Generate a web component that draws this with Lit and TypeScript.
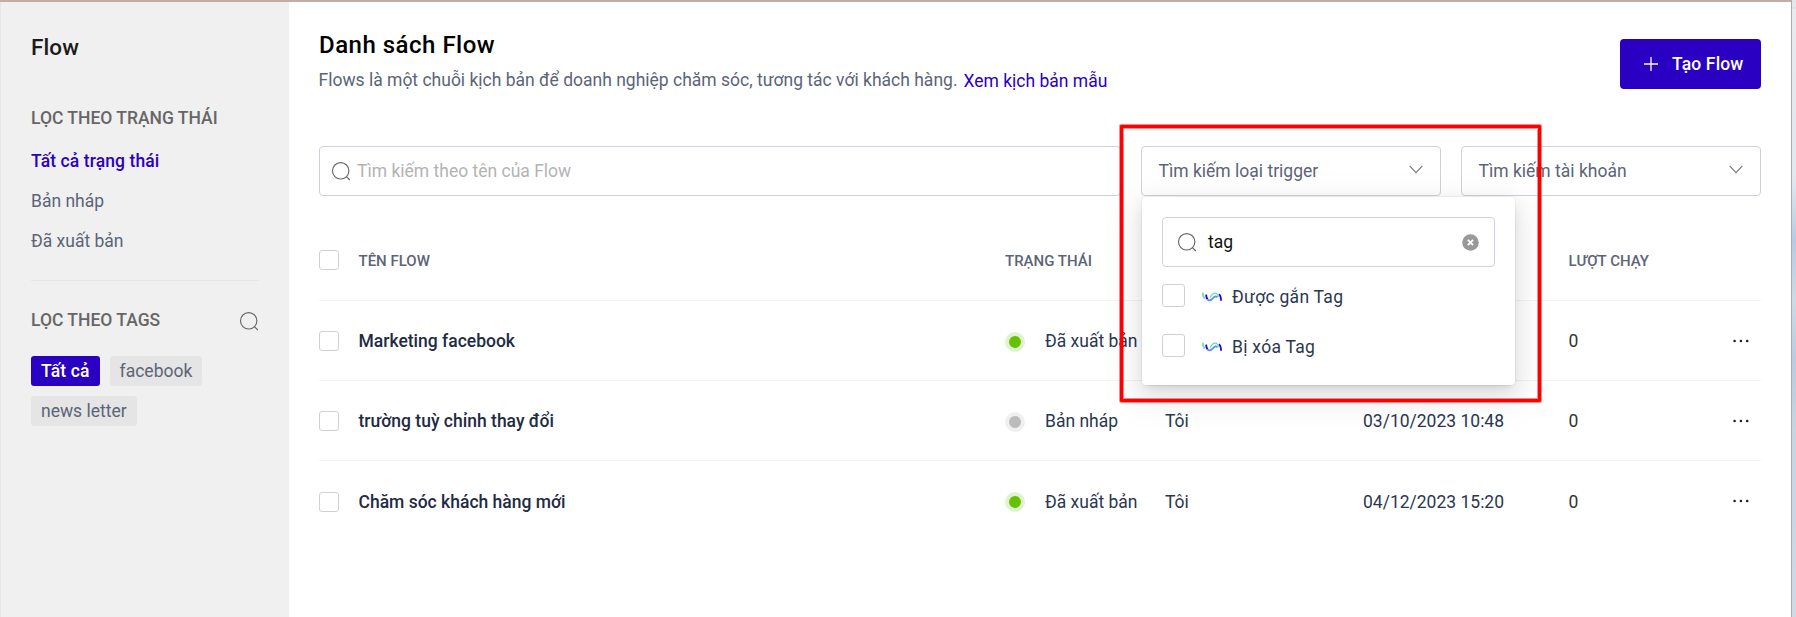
import { LitElement, html, css, svg } from "lit";
import { customElement } from "lit/decorators.js";
import { classMap } from "lit/directives/class-map.js";

const searchIcon = html`<svg class="search-icon" width="20" height="20" viewBox="0 0 20 20" fill="none" stroke="currentColor" stroke-width="1.15">
  <circle cx="9.7" cy="9.8" r="8.2"></circle>
  <path d="M15.4 15.6L18.8 19"></path>
</svg>`;

const chevron = html`<svg class="chevron" width="14" height="9" viewBox="0 0 14 9" fill="none" stroke="#777" stroke-width="1.1">
  <path d="M0.7 0.8L7 7.6L13.3 0.8"></path>
</svg>`;

const strands = svg`
  <path d="M0.8 0.8 C0.9 3.4 1.4 5.2 2.8 6.6" stroke="#62e3bf"></path>
  <path d="M4.1 2.6 C4.2 4.6 4.7 6.2 5.6 7.4" stroke="#2b00c4"></path>
  <path d="M5.6 7.8 C7.8 9.4 9.8 7.6 11.2 6 C12.6 4.2 14.6 3.6 15.4 5.4" stroke="#4b8dff"></path>
  <path d="M8 5.6 C9.4 3 11.8 0.6 14 1.2 C15.8 1.8 16.2 3.6 16.4 5" stroke="#5fdcc8" stroke-width="1.3"></path>
  <path d="M17 2.2 C18.5 3.4 19 5.8 19.1 8.8" stroke="#2b00c4"></path>`;
const brandIcon = html`<svg class="brand" width="20" height="10" viewBox="0 0 20 10" fill="none" stroke-width="1.8">${strands}</svg>`;

const rows = [
  { name: "Marketing facebook", status: "Đã xuất bản", live: true, owner: "", date: "", runs: 0 },
  { name: "trường tuỳ chỉnh thay đổi", status: "Bản nháp", live: false, owner: "Tôi", date: "03/10/2023 10:48", runs: 0 },
  { name: "Chăm sóc khách hàng mới", status: "Đã xuất bản", live: true, owner: "Tôi", date: "04/12/2023 15:20", runs: 0 },
];

@customElement("app-root")
export class AppRoot extends LitElement {
  static styles = css`
    :host { display: block; font-family: Roboto, "Liberation Sans", sans-serif; font-size: 17.5px; line-height: 22px; color: #5b6478; }
    * { box-sizing: border-box; }
    svg { display: block; flex: none; }
    .page { position: relative; display: flex; width: 1796px; height: 617px; background: #fff; overflow: hidden; }
    .window { flex: 1; display: flex; border-top: 2px solid #c4aca6; }
    .edge { width: 5px; border-left: 1px solid #a9adb3; background: linear-gradient(#e6e7ea 0, #e6e7ea 7px, #d8dadd 8px, #e8eaed 9px, #e2e7ee 180px, #b5cbe4 240px, #ccd9e8 300px, #b9cce2 360px, #c6d4e5 430px, #d0d9e6 617px); }

    .sidebar { width: 289px; background: #f0f0f0; border-left: 1px solid #e6e6e6; padding: 25px 30px 0; }
    .brand-title { font-size: 22.5px; line-height: 28px; color: #1b1b1b; font-weight: 500; padding-top: 6px; letter-spacing: 0.1px; }
    .section { display: flex; justify-content: space-between; font-weight: 500; color: #666; }
    .states { margin-top: 46px; }
    .state { margin-top: 18px; }
    .state:first-of-type { margin-top: 21px; }
    .state.active { color: #2b00c4; font-weight: 500; letter-spacing: 0.1px; }
    .tags-head { margin-top: 28px; padding-top: 28px; border-top: 1px solid #e7e7e7; width: 228px; }
    .tags-head .search-icon { margin-top: 2px; color: #666; }
    .tags { display: flex; flex-wrap: wrap; gap: 10px; margin-top: 25px; }
    .tag { height: 30px; line-height: 31px; padding: 0 10px; border-radius: 3px; background: #e5e5e5; }
    .tag.active { background: #2a00c2; color: #fff; font-weight: 500; letter-spacing: 0.15px; }

    .main { flex: 1; padding: 29px 30px 0; }
    .header { display: flex; justify-content: space-between; height: 115px; }
    .title { font-size: 24px; line-height: 28px; color: #000; font-weight: 500; letter-spacing: 0.5px; }
    .sub { display: flex; gap: 6px; margin-top: 10px; }
    .sub .lead { margin-left: -0.5px; }
    .link { color: #2b00c4; padding-top: 1px; }
    .create { width: 141px; height: 50px; margin-top: 8px; border-radius: 4px; background: #2a00c2; color: #fff; font-weight: 500; letter-spacing: 0.15px; display: flex; align-items: center; padding: 0 0 0 24px; gap: 14px; }
    .filters { display: grid; grid-template-columns: 1fr 300px 300px; gap: 20px; }
    .box { position: relative; height: 50px; border: 1px solid #d0d1da; border-radius: 4px; display: flex; align-items: center; }
    .search { padding-left: 11px; color: #666; }
    .search .placeholder { margin-left: 6px; color: #b3b3b3; }
    .select { padding: 0 17.5px 0 16.5px; justify-content: space-between; }
    .chevron { margin-top: -4px; }

    .popup { position: absolute; z-index: 2; top: 50px; left: 0; width: 373px; height: 188px; padding: 20px; background: #fff; border-radius: 4px; color: #2a3750;
      box-shadow: 0 0 0 1px rgba(0,0,0,.04), 0 4px 7.5px -5px rgba(0,0,0,.16), 0 7.5px 20px rgba(0,0,0,.1), 0 11px 35px 10px rgba(0,0,0,.05); }
    .find { width: 333px; padding: 0 15.5px 0 14px; color: #666; }
    .find .query { flex: 1; margin-left: 11px; color: #111; }
    .option { display: flex; height: 50px; padding-top: 17px; }
    .check { width: 20px; height: 20px; border: 1px solid #d0d1d8; border-radius: 3px; background: #fff; }
    .option .check { width: 23px; height: 23px; }
    .option .brand { margin: 8px 10px 0 17px; }
    .option .label { padding-top: 2px; letter-spacing: 0.28px; }

    .table { margin-top: 24px; }
    .row { display: grid; grid-template-columns: 39.5px 646.5px 160px 198px 205.5px 1fr 28px; align-items: start; height: 80px; color: #2a3750; border-bottom: 1px solid #f2f2f2; }
    .row:last-child { border-bottom: 0; }
    .row .check { margin-top: 30px; }
    .cell { padding-top: 29px; }
    .row.last .check { margin-top: 31px; }
    .row.last .cell { padding-top: 30px; }
    .row.head { height: 81px; font-size: 15px; line-height: 20px; font-weight: 500; color: #5b6478; }
    .head .cell { padding-top: 31px; }
    .name { font-weight: 500; color: #1e2b45; }
    .status { display: grid; grid-template-columns: 40px 1fr; align-items: start; }
    .dot { width: 20px; height: 20px; margin-top: 31px; border: 4px solid #e0f2cf; border-radius: 50%; background: #66c200; }
    .dot.draft { border-color: #f0f0f0; background: #bbb; }
    .runs { color: #333; }
    .more { margin-top: 38px; }
    .highlight { position: absolute; z-index: 3; left: 1120px; top: 125px; width: 421px; height: 277px; border: 3px solid #f00; box-shadow: 0 0 0 1px rgba(255,0,0,.45), inset 0 0 0 1px rgba(255,0,0,.45); border-radius: 1px; }
  `;

  private option(label: string) {
    return html`<div class="option"><span class="check"></span>${brandIcon}<span class="label">${label}</span></div>`;
  }

  private row(r: (typeof rows)[number], i: number) {
    return html`<div class=${classMap({ row: true, last: i === rows.length - 1 })}>
      <span class="check"></span>
      <span class="cell name">${r.name}</span>
      <span class="status"><i class=${classMap({ dot: true, draft: !r.live })}></i><span class="cell">${r.status}</span></span>
      <span class="cell">${r.owner}</span>
      <span class="cell">${r.date}</span>
      <span class="cell runs">${r.runs}</span>
      <svg class="more" width="16" height="4" viewBox="0 0 16 4" fill="#222"><circle cx="1.6" cy="2" r="1.3"></circle><circle cx="7.9" cy="2" r="1.3"></circle><circle cx="14.2" cy="2" r="1.3"></circle></svg>
    </div>`;
  }

  render() {
    return html`<div class="page">
      <div class="window">
        <aside class="sidebar">
          <div class="brand-title">Flow</div>
          <div class="section states">LỌC THEO TRẠNG THÁI</div>
          <nav>
            <div class="state active">Tất cả trạng thái</div>
            <div class="state">Bản nháp</div>
            <div class="state">Đã xuất bản</div>
          </nav>
          <div class="section tags-head"><span>LỌC THEO TAGS</span>${searchIcon}</div>
          <div class="tags"><span class="tag active">Tất cả</span><span class="tag">facebook</span><span class="tag">news letter</span></div>
        </aside>
        <main class="main">
          <div class="header">
            <div>
              <div class="title">Danh sách Flow</div>
              <div class="sub"><span class="lead">Flows là một chuỗi kịch bản để doanh nghiệp chăm sóc, tương tác với khách hàng.</span><span class="link">Xem kịch bản mẫu</span></div>
            </div>
            <div class="create">
              <svg width="14" height="14" viewBox="0 0 14 14" stroke="#fff" stroke-width="1.3"><path d="M7 0V14M0 7H14"></path></svg>
              <span>Tạo Flow</span>
            </div>
          </div>
          <div class="filters">
            <div class="box search">${searchIcon}<span class="placeholder">Tìm kiếm theo tên của Flow</span></div>
            <div class="box select"><span>Tìm kiếm loại trigger</span>${chevron}
              <div class="popup">
                <div class="box find">${searchIcon}<span class="query">tag</span>
                  <svg width="17" height="17" viewBox="0 0 17 17"><circle cx="8.5" cy="8.5" r="8.3" fill="#999"></circle><path d="M5.9 5.9L11.1 11.1M11.1 5.9L5.9 11.1" stroke="#fff" stroke-width="2"></path></svg>
                </div>
                ${this.option("Được gắn Tag")}${this.option("Bị xóa Tag")}
              </div>
            </div>
            <div class="box select"><span>Tìm kiếm tài khoản</span>${chevron}</div>
          </div>
          <div class="table">
            <div class="row head"><span class="check"></span><span class="cell">TÊN FLOW</span><span class="cell">TRẠNG THÁI</span><span></span><span></span><span class="cell">LƯỢT CHẠY</span></div>
            ${rows.map((r, i) => this.row(r, i))}
          </div>
        </main>
      </div>
      <div class="edge"></div>
      <div class="highlight"></div>
    </div>`;
  }
}
